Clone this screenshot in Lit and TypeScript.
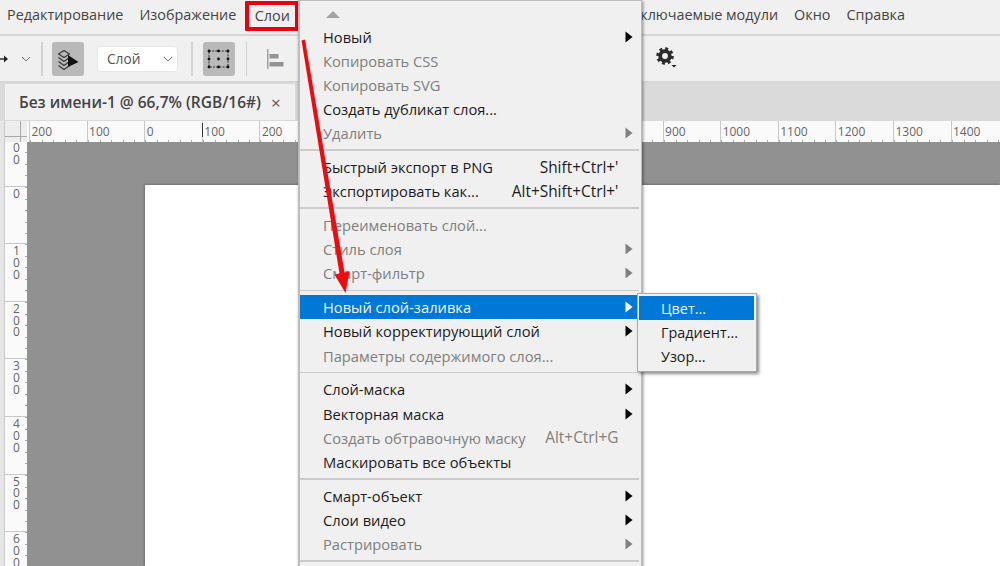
import { LitElement, html, css, svg } from "lit";
import { customElement } from "lit/decorators.js";

type Row = { t?: string; k?: string; d?: boolean; a?: boolean; s?: boolean; sep?: boolean };

const MENU: Row[] = [
  { t: "Новый", a: true },
  { t: "Копировать CSS", d: true },
  { t: "Копировать SVG", d: true },
  { t: "Создать дубликат слоя..." },
  { t: "Удалить", d: true, a: true },
  { sep: true },
  { t: "Быстрый экспорт в PNG", k: "Shift+Ctrl+'" },
  { t: "Экспортировать как...", k: "Alt+Shift+Ctrl+'" },
  { sep: true },
  { t: "Переименовать слой...", d: true },
  { t: "Стиль слоя", d: true, a: true },
  { t: "Смарт-фильтр", d: true, a: true },
  { sep: true },
  { t: "Новый слой-заливка", a: true, s: true },
  { t: "Новый корректирующий слой", a: true },
  { t: "Параметры содержимого слоя...", d: true },
  { sep: true },
  { t: "Слой-маска", a: true },
  { t: "Векторная маска", a: true },
  { t: "Создать обтравочную маску", k: "Alt+Ctrl+G", d: true },
  { t: "Маскировать все объекты" },
  { sep: true },
  { t: "Смарт-объект", a: true },
  { t: "Слои видео", a: true },
  { t: "Растрировать", d: true, a: true },
  { sep: true },
];

const H_LABELS = [200, 100, 0, 100, 200, 300, 400, 500, 600, 700, 800, 900, 1000, 1100, 1200, 1300, 1400];
const V_LABELS = ["00", "0", "100", "200", "300", "400", "500", "600"];

const layersIcon = svg`<svg width="32" height="34" viewBox="0 0 32 34">
  <g fill="none" stroke="#333" stroke-width="1.1" stroke-linejoin="round">
    <path d="M6.500 12 12 8.500l5.500 3.500-5.500 3.500z"/>
    <path d="M6.500 15.500 12 19.500l5.500-4"/>
    <path d="M6.500 19.500 12 23.500l5.500-4"/>
    <path d="M6.500 23.500 12 27.500l5.500-4"/>
  </g>
  <path d="M16 13 26.500 20 16 25z" fill="#111"/>
</svg>`;

const transformIcon = svg`<svg width="32" height="34" viewBox="0 0 32 34">
  <rect x="6" y="9" width="19" height="16" fill="none" stroke="#333" stroke-width="1" stroke-dasharray="2 1.200"/>
  <g fill="#111">
    <circle cx="6" cy="9" r="1.400"/><circle cx="15.500" cy="9" r="1.400"/><circle cx="25" cy="9" r="1.400"/>
    <circle cx="6" cy="17" r="1.400"/><circle cx="15.500" cy="17" r="1.400"/><circle cx="25" cy="17" r="1.400"/>
    <circle cx="6" cy="25" r="1.400"/><circle cx="15.500" cy="25" r="1.400"/><circle cx="25" cy="25" r="1.400"/>
  </g>
</svg>`;

const alignIcon = svg`<svg width="17" height="20" viewBox="0 0 17 20">
  <rect x="0" y="0" width="1.500" height="20" fill="#a0a0a0"/>
  <rect x="2.500" y="5" width="9" height="4.500" fill="#949494"/>
  <rect x="2.500" y="13" width="14" height="4.500" fill="#949494"/>
</svg>`;

const gearIcon = svg`<svg width="24" height="26" viewBox="0 0 24 26">
  <circle cx="9" cy="9" r="4.800" fill="none" stroke="#2b2b2b" stroke-width="3.800"/>
  <circle cx="9" cy="9" r="7.300" fill="none" stroke="#2b2b2b" stroke-width="3" stroke-dasharray="2.900 2.830"/>
  <path d="M15.500 18h5l-2.500 2.500z" fill="#222"/>
</svg>`;

const moveArrow = svg`<svg width="8" height="12" viewBox="0 0 8 12">
  <path d="M0 6h6" stroke="#222" stroke-width="1.400"/><path d="M4 2.500 8 6 4 9.500z" fill="#222"/>
</svg>`;

const chevron = svg`<svg width="10" height="6" viewBox="0 0 10 6"><path d="M1 1l4 4 4-4" fill="none" stroke="#777" stroke-width="1"/></svg>`;

@customElement("app-root")
export class AppRoot extends LitElement {
  static styles = css`
    :host {
      display: block;
      position: relative;
      width: 1000px;
      height: 566px;
      overflow: hidden;
      background: #f0f0f0;
      font-family: "Open Sans", "Noto Sans", sans-serif;
      color: #444;
    }
    .app { display: flex; flex-direction: column; height: 566px; }

    .menubar {
      flex: none; height: 34px; box-sizing: content-box;
      display: flex; align-items: flex-start;
      border-bottom: 2px solid #d6d6d6;
      font-size: 14.400px; line-height: 30px;
      padding-left: 7px;
    }
    .mgroup { display: flex; gap: 16px; white-space: nowrap; }
    .mgroup.right { margin-left: auto; padding-right: 95px; }
    .mi.boxed {
      box-sizing: border-box; width: 54px; height: 30px; margin: 1px -9px 0 -7px;
      border: 4px solid #e8000f; line-height: 22px; text-align: center; border-radius: 1px;
    }

    .toolbar {
      flex: none; height: 45px; display: flex; align-items: center;
      border-bottom: 2px solid #d6d6d6;
    }
    .moveicon { display: flex; width: 21px; }
    .chev { display: flex; width: 20px; }
    .tsep { width: 1.500px; height: 34px; background: #d2d2d2; flex: none; }
    .tbtn {
      width: 32px; height: 34px; background: #b9b9b9; border-radius: 3px; flex: none;
      display: flex;
    }
    .sel {
      box-sizing: border-box; width: 81px; height: 26px; background: #fff; border: 1px solid #e6e6e6;
      border-radius: 4px; display: flex; align-items: center; justify-content: space-between;
      padding: 0 4px 0 9px; font-size: 13.700px; color: #555; flex: none;
    }
    .ml9 { margin-left: 9.500px; } .ml10 { margin-left: 10.500px; } .ml13 { margin-left: 13px; }
    .alignbox { margin-left: 19.500px; display: flex; }
    .gear { margin-left: 372.500px; display: flex; margin-top: 3px; }

    .tabs { flex: none; height: 38px; background: #dadada; display: flex; padding-left: 5px; }
    .tab {
      box-sizing: border-box; width: 290px; height: 36px; margin-top: 1px; background: #f0f0f0;
      display: flex; align-items: center; padding-left: 14px; gap: 10px;
      font-size: 15.500px; font-weight: 600; color: #444; white-space: nowrap;
    }
    .tab .x { font-size: 17px; font-weight: 400; color: #555; }

    .work {
      flex: 1; min-height: 0;
      display: grid; grid-template-columns: 5px 22px 1fr; grid-template-rows: 21px 1fr;
    }
    .strip { grid-row: 1 / 3; background: #e6e6e6; border-right: 1px solid #c9c9c9; }
    .corner {
      background: #ededed;
      background-image:
        linear-gradient(#aaa, #aaa), linear-gradient(#aaa, #aaa);
      background-size: 22px 1px, 1px 21px;
      background-position: 0 15px, 15px 0;
      background-repeat: no-repeat;
    }
    .hruler {
      position: relative; background: #fafafa; overflow: hidden; display: flex; padding-left: 2px;
    }
    .hcell {
      flex: none; box-sizing: border-box; width: 57.600px; height: 21px;
      border-left: 1px solid #c8c8c8; padding: 3px 0 0 1.500px;
      font-size: 12px; line-height: 16px; color: #666;
      background-image: repeating-linear-gradient(to right, #aaa 0 1px, transparent 1px 11.520px);
      background-size: 100% 2px; background-position: 0 100%; background-repeat: no-repeat;
    }
    .marker { position: absolute; left: 174.500px; top: 2px; width: 1.500px; height: 14px; background: #333; }
    .vruler { background: #fafafa; overflow: hidden; }
    .vcell {
      box-sizing: border-box; height: 57.600px; border-top: 1px solid #c8c8c8;
      font-size: 12px; line-height: 11.800px; color: #666;
      display: flex; flex-direction: column; padding: 1px 0 0 8px;
      background-image: repeating-linear-gradient(to bottom, #aaa 0 1px, transparent 1px 11.520px);
      background-size: 2px 100%; background-position: 100% 0; background-repeat: no-repeat;
    }
    .vcell.first { margin-top: -14px; padding-top: 13.200px; }
    .space {
      background: #919191; padding: 43px 0 0 118px; display: flex; overflow: hidden;
    }
    .canvas { flex: 1; background: #fff; box-shadow: -1px -1px 2px #6f6f6f; }

    .menu {
      position: absolute; left: 298px; top: 0; width: 344px; height: 580px;
      box-sizing: border-box; background: #f0f0f0;
      border-left: 2px solid #bdbdbd; border-right: 1.500px solid #bdbdbd; border-top: 1px solid #bdbdbd;
      box-shadow: 1px 1px 3px rgba(0,0,0,.45);
      font-size: 14.700px; color: #1c1c1c;
    }
    .up { height: 24px; display: flex; align-items: center; padding-left: 26px; }
    .up svg { margin-top: 2px; }
    .row {
      height: 24.100px; display: flex; align-items: center; padding-left: 23px; padding-right: 8.500px;
      white-space: nowrap;
    }
    .row .lbl { flex: 1; }
    .row .key { margin-right: -2px; font-size: 15.400px; }
    .row .arr { width: 16px; flex: none; display: flex; justify-content: flex-end; }
    .row.dis { color: #7f7f7f; }
    .row.on { background: #0078d7; color: #f2f7fc; }
    .msep { height: 1.800px; margin: 4px 2px 4px 0; background: #cbcbcb; }

    .sub {
      position: absolute; left: 637px; top: 293px; width: 120px; height: 79px;
      box-sizing: border-box; background: #f0f0f0; border: 1px solid #a9a9a9;
      box-shadow: 2px 2px 3px rgba(0,0,0,.45); padding: 2px 2px 0 1px;
      font-size: 14.400px; color: #1c1c1c;
    }
    .sub div {
      height: 24.300px; display: flex; align-items: center; padding-left: 22px;
    }
    .sub .on { background: #0078d7; color: #f2f7fc; }

    .annot { position: absolute; left: 0; top: 0; pointer-events: none; }
  `;

  private arrow(r: Row) {
    if (!r.a) return html`<span class="arr"></span>`;
    const fill = r.s ? "#ffffff" : r.d ? "#808080" : "#000000";
    return html`<span class="arr"><svg width="8" height="12" viewBox="0 0 8 12"><path d="M0.500 0.500 7.500 6 0.500 11.500z" fill=${fill}/></svg></span>`;
  }

  render() {
    return html`
      <div class="app">
        <div class="menubar">
          <div class="mgroup">
            <span class="mi">Редактирование</span>
            <span class="mi">Изображение</span>
            <span class="mi boxed">Слои</span>
          </div>
          <div class="mgroup right">
            <span class="mi">Внешние подключаемые модули</span>
            <span class="mi">Окно</span>
            <span class="mi">Справка</span>
          </div>
        </div>

        <div class="toolbar">
          <span class="moveicon">${moveArrow}</span>
          <span class="chev">${chevron}</span>
          <span class="tsep"></span>
          <span class="tbtn ml9">${layersIcon}</span>
          <span class="sel ml13"><span>Слой</span>${chevron}</span>
          <span class="tsep ml13"></span>
          <span class="tbtn ml10">${transformIcon}</span>
          <span class="tsep ml10"></span>
          <span class="alignbox">${alignIcon}</span>
          <span class="gear">${gearIcon}</span>
        </div>

        <div class="tabs">
          <div class="tab"><span>Без имени-1 @ 66,7% (RGB/16#)</span><span class="x">×</span></div>
        </div>

        <div class="work">
          <div class="strip"></div>
          <div class="corner"></div>
          <div class="hruler">
            ${H_LABELS.map((n) => html`<div class="hcell">${n}</div>`)}
            <span class="marker"></span>
          </div>
          <div class="vruler">
            ${V_LABELS.map(
              (n, i) => html`<div class="vcell ${i === 0 ? "first" : ""}">
                ${n.split("").map((c) => html`<span>${c}</span>`)}
              </div>`
            )}
          </div>
          <div class="space"><div class="canvas"></div></div>
        </div>
      </div>

      <div class="menu">
        <div class="up"><svg width="14" height="7" viewBox="0 0 14 7"><path d="M7 0 14 7H0z" fill="#a3a3a3"/></svg></div>
        ${MENU.map((r) =>
          r.sep
            ? html`<div class="msep"></div>`
            : html`<div class="row ${r.d ? "dis" : ""} ${r.s ? "on" : ""}">
                <span class="lbl">${r.t}</span>
                ${r.k ? html`<span class="key">${r.k}</span>` : ""}
                ${this.arrow(r)}
              </div>`
        )}
      </div>

      <div class="sub">
        <div class="on">Цвет...</div>
        <div>Градиент...</div>
        <div>Узор...</div>
      </div>

      <svg class="annot" width="1000" height="566" viewBox="0 0 1000 566">
        <path d="M301.500 40.500 305 39.500 344.500 272.500 349.500 271.500 345.500 293 334.500 274.500 339.500 273.500Z" fill="#ef0a10"/>
      </svg>
    `;
  }
}
